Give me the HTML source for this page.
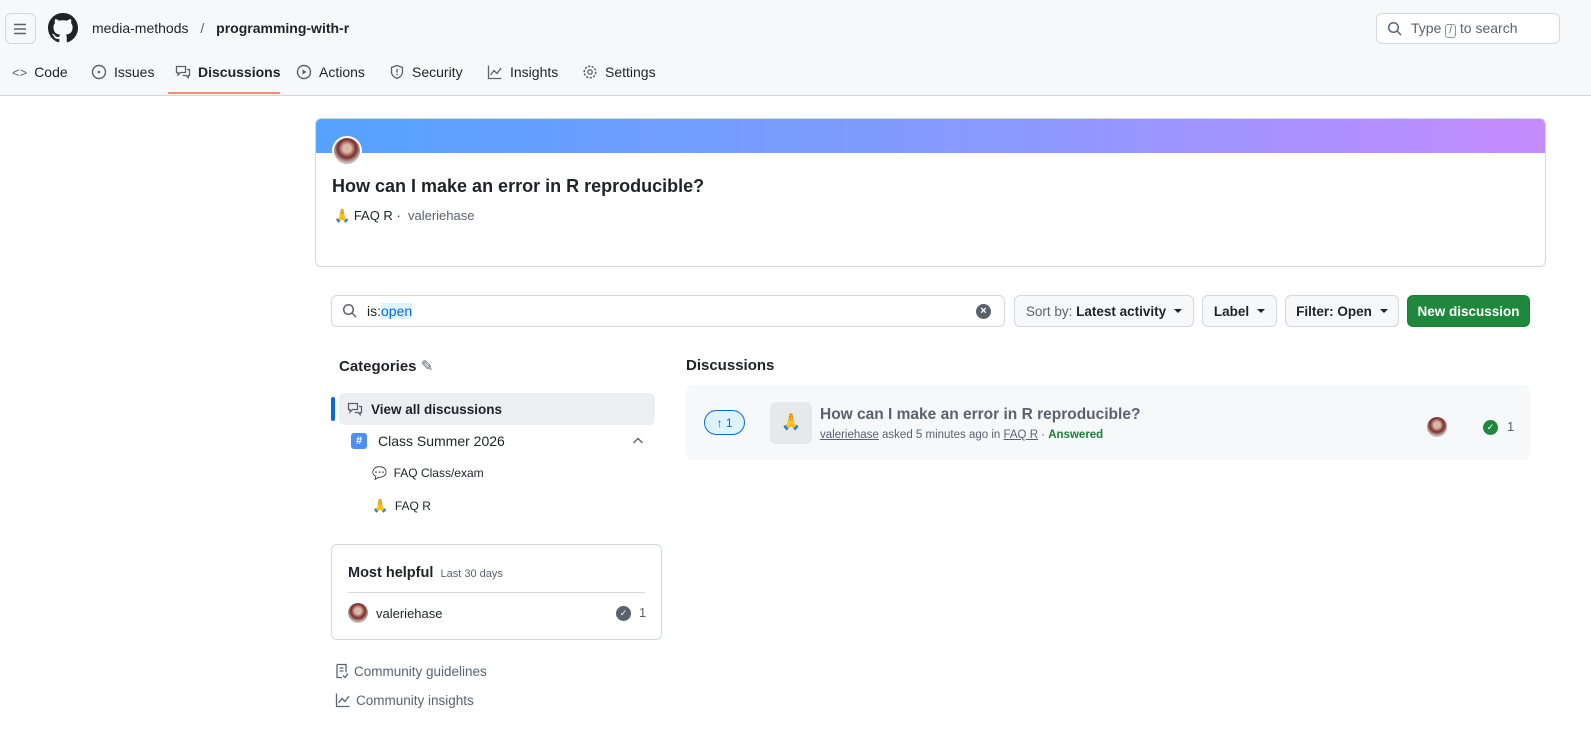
<!DOCTYPE html>
<html><head><style>
*{box-sizing:border-box;margin:0;padding:0}
body{width:1591px;height:756px;background:#fff;font-family:"Liberation Sans",sans-serif;color:#1f2328;position:relative;overflow:hidden;font-size:14px}
.a{position:absolute}
.hdr{left:0;top:0;width:1591px;height:96px;background:#f6f8fa;border-bottom:1px solid #d1d9e0}
.tab{top:64px;font-size:14px;display:flex;align-items:center;gap:7px;color:#1f2328}
svg{display:block}
.btn{top:295px;height:32px;border:1px solid #d1d9e0;border-radius:6px;background:#f6f8fa;font-size:13.5px;display:flex;align-items:center;justify-content:center;gap:8px;color:#1f2328}
.car{width:0;height:0;border-left:4px solid transparent;border-right:4px solid transparent;border-top:4px solid #1f2328}
.pray{font-size:13px}
</style></head><body>
<div class="a hdr"></div>
<div class="a" style="left:5px;top:13px;width:31px;height:31px;border:1px solid #d1d9e0;border-radius:6px;background:#f6f8fa"></div>
<svg class="a" style="left:12px;top:21px" width="16" height="16" viewBox="0 0 16 16"><path d="M2 3.5h12M2 8h12M2 12.5h12" stroke="#59636e" stroke-width="1.5"/></svg>
<svg class="a" style="left:48px;top:13px" width="30" height="30" viewBox="0 0 16 16"><path fill="#1f2328" d="M8 0C3.58 0 0 3.58 0 8c0 3.54 2.29 6.53 5.47 7.59.4.07.55-.17.55-.38 0-.19-.01-.82-.01-1.49-2.01.37-2.53-.49-2.69-.94-.09-.23-.48-.94-.82-1.13-.28-.15-.68-.52-.01-.53.63-.01 1.08.58 1.23.82.72 1.21 1.87.87 2.33.66.07-.52.28-.87.51-1.07-1.78-.2-3.64-.89-3.64-3.95 0-.87.31-1.59.82-2.15-.08-.2-.36-1.02.08-2.12 0 0 .67-.21 2.2.82.64-.18 1.32-.27 2-.27.68 0 1.36.09 2 .27 1.53-1.04 2.2-.82 2.2-.82.44 1.1.16 1.92.08 2.12.51.56.82 1.27.82 2.15 0 3.07-1.87 3.75-3.65 3.95.29.25.54.73.54 1.48 0 1.07-.01 1.93-.01 2.2 0 .21.15.46.55.38A8.013 8.013 0 0016 8c0-4.42-3.58-8-8-8z"/></svg>
<div class="a" style="left:92px;top:20px;font-size:14px">media-methods <span style="color:#59636e;margin:0 8px">/</span> <b style="font-weight:600">programming-with-r</b></div>
<div class="a" style="left:1376px;top:13px;width:184px;height:31px;border:1px solid #d1d9e0;border-radius:6px;background:#fff;font-size:14px;color:#59636e;display:flex;align-items:center;padding-left:10px;gap:8px">
<svg width="16" height="16" viewBox="0 0 16 16"><circle cx="6.5" cy="6.5" r="4.8" fill="none" stroke="#59636e" stroke-width="1.5"/><path d="M10 10l4 4" stroke="#59636e" stroke-width="1.5"/></svg>
<span>Type <span style="display:inline-block;border:1px solid #8c959f;border-radius:3px;font-size:10px;padding:0 3px;line-height:12px">/</span> to search</span></div>

<div class="a tab" style="left:12px"><span style="font-size:13px;color:#59636e">&lt;&gt;</span>Code</div>
<div class="a tab" style="left:91px"><svg width="16" height="16"><circle cx="8" cy="8" r="6.5" fill="none" stroke="#59636e" stroke-width="1.4"/><circle cx="8" cy="8" r="1.3" fill="#59636e"/></svg>Issues</div>
<div class="a tab" style="left:175px;font-weight:600"><svg width="16" height="16"><path d="M1.5 2.5h9v6h-5l-2.5 2.5v-2.5h-1.5z M12 5.5h2.5v6h-1.3v2l-2-2h-3.5" fill="none" stroke="#59636e" stroke-width="1.3"/></svg>Discussions</div>
<div class="a" style="left:168px;top:92px;width:112px;height:2px;background:#fd8c73"></div>
<div class="a tab" style="left:296px"><svg width="16" height="16"><circle cx="8" cy="8" r="6.5" fill="none" stroke="#59636e" stroke-width="1.4"/><path d="M6.5 5.3v5.4l4-2.7z" fill="#59636e"/></svg>Actions</div>
<div class="a tab" style="left:389px"><svg width="16" height="16"><path d="M8 1.5l5.5 2v4.5c0 3-2.5 5.2-5.5 6.5C5 13.2 2.5 11 2.5 8V3.5z" fill="none" stroke="#59636e" stroke-width="1.3"/><path d="M8 5v3.5" stroke="#59636e" stroke-width="1.4"/><circle cx="8" cy="10.5" r=".8" fill="#59636e"/></svg>Security</div>
<div class="a tab" style="left:487px"><svg width="16" height="16"><path d="M1.5 1.5v13h13" fill="none" stroke="#59636e" stroke-width="1.3"/><path d="M3.5 11l3.5-4.5 3 3 4-5.5" fill="none" stroke="#59636e" stroke-width="1.3"/></svg>Insights</div>
<div class="a tab" style="left:582px"><svg width="16" height="16"><circle cx="8" cy="8" r="5.8" fill="none" stroke="#59636e" stroke-width="1.5" stroke-dasharray="2.2 1.4"/><circle cx="8" cy="8" r="2.2" fill="none" stroke="#59636e" stroke-width="1.3"/></svg>Settings</div>

<!-- banner -->
<div class="a" style="left:315px;top:118px;width:1231px;height:149px;border:1px solid #d1d9e0;border-radius:6px;overflow:hidden">
<div style="height:34px;background:linear-gradient(90deg,#54a3ff,#8e98ff 60%,#c58bff)"></div></div>
<div class="a" style="left:332px;top:136px;width:30px;height:30px;border-radius:50%;border:2px solid #fff;background:radial-gradient(circle at 50% 40%,#d9b8a8 20%,#7a2b2b 45%,#c8c0b8 70%)"></div>
<div class="a" style="left:332px;top:176px;font-size:18px;font-weight:600">How can I make an error in R reproducible?</div>
<div class="a" style="left:334px;top:208px;font-size:13px;color:#59636e"><span class="pray">🙏</span> <span style="color:#1f2328">FAQ R ·</span> &nbsp;valeriehase</div>

<!-- search -->
<div class="a" style="left:331px;top:295px;width:674px;height:32px;border:1px solid #d1d9e0;border-radius:6px;display:flex;align-items:center;padding-left:10px;gap:9px;font-size:14px">
<svg width="16" height="16"><circle cx="6.5" cy="6.5" r="4.8" fill="none" stroke="#59636e" stroke-width="1.5"/><path d="M10 10l4 4" stroke="#59636e" stroke-width="1.5"/></svg>
<span>is:<span style="background:#ddf4ff;color:#0969da">open</span></span></div>
<div class="a" style="left:976px;top:304px;width:15px;height:15px;border-radius:50%;background:#59636e;color:#fff;font-size:11px;line-height:15px;text-align:center;font-weight:bold">×</div>
<div class="a btn" style="left:1014px;width:180px"><span><span style="color:#59636e">Sort by:</span> <b style="font-weight:600">Latest activity</b></span><span class="car"></span></div>
<div class="a btn" style="left:1202px;width:75px;font-weight:600">Label<span class="car"></span></div>
<div class="a btn" style="left:1285px;width:114px;font-weight:600">Filter: Open<span class="car"></span></div>
<div class="a btn" style="left:1407px;width:123px;background:#1f883d;border-color:#1a7f37;color:#fff;font-weight:600">New discussion</div>

<!-- sidebar -->
<div class="a" style="left:339px;top:357px;font-size:15px;font-weight:600">Categories <span style="color:#59636e;font-weight:normal">✎</span></div>
<div class="a" style="left:331px;top:397px;width:4px;height:24px;background:#0969da;border-radius:2px"></div>
<div class="a" style="left:339px;top:393px;width:316px;height:32px;background:#eceef1;border-radius:6px;display:flex;align-items:center;padding-left:8px;gap:8px;font-size:13.5px;font-weight:600">
<svg width="16" height="16"><path d="M1.5 2.5h9v6h-5l-2.5 2.5v-2.5h-1.5z M12 5.5h2.5v6h-1.3v2l-2-2h-3.5" fill="none" stroke="#59636e" stroke-width="1.3"/></svg>View all discussions</div>
<div class="a" style="left:351px;top:433px;width:16px;height:16px;background:#4c8ff0;border-radius:3px;color:#fff;font-size:11px;text-align:center;line-height:16px;font-weight:bold">#</div>
<div class="a" style="left:378px;top:433px;font-size:14px">Class Summer 2026</div>
<svg class="a" style="left:632px;top:436px" width="12" height="10"><path d="M1.5 7l4.5-4.5 4.5 4.5" fill="none" stroke="#59636e" stroke-width="1.4"/></svg>
<div class="a" style="left:372px;top:466px;font-size:12px;color:#1f2328"><span style="color:#c8b6f0">💬</span>&nbsp; FAQ Class/exam</div>
<div class="a" style="left:372px;top:498px;font-size:12px"><span class="pray">🙏</span>&nbsp; FAQ R</div>

<div class="a" style="left:331px;top:544px;width:331px;height:96px;border:1px solid #d1d9e0;border-radius:6px"></div>
<div class="a" style="left:348px;top:565px;font-size:14.5px;font-weight:600">Most helpful <span style="font-size:11px;color:#59636e;font-weight:normal">&nbsp;Last 30 days</span></div>
<div class="a" style="left:348px;top:592px;width:297px;height:1px;background:#d1d9e0"></div>
<div class="a" style="left:348px;top:603px;width:20px;height:20px;border-radius:50%;background:radial-gradient(circle at 50% 40%,#d9b8a8 20%,#7a2b2b 45%,#c8c0b8 70%)"></div>
<div class="a" style="left:376px;top:606px;font-size:13px">valeriehase</div>
<div class="a" style="left:616px;top:606px;width:15px;height:15px;border-radius:50%;background:#59636e;color:#fff;font-size:9px;text-align:center;line-height:15px">✓</div>
<div class="a" style="left:639px;top:605px;font-size:13px;color:#59636e">1</div>

<div class="a" style="left:335px;top:663px;font-size:13.5px;color:#59636e;display:flex;gap:5px;align-items:center"><svg width="14" height="16"><path d="M2 1.5h9v8M2 1.5v13h5M4.5 5h4M4.5 8h4M8 12.5l2 2 3-4" fill="none" stroke="#59636e" stroke-width="1.3"/></svg>Community guidelines</div>
<div class="a" style="left:335px;top:692px;font-size:13.5px;color:#59636e;display:flex;gap:5px;align-items:center"><svg width="16" height="16"><path d="M1.5 1.5v13h13" fill="none" stroke="#59636e" stroke-width="1.3"/><path d="M3.5 11l3.5-4.5 3 3 4-5.5" fill="none" stroke="#59636e" stroke-width="1.3"/></svg>Community insights</div>

<!-- discussions -->
<div class="a" style="left:686px;top:357px;font-size:15px;font-weight:600">Discussions</div>
<div class="a" style="left:686px;top:385px;width:844px;height:75px;background:#f6f8fa;border-radius:6px"></div>
<div class="a" style="left:704px;top:410px;width:41px;height:25px;border:1px solid #0969da;border-radius:13px;background:#ddf4ff;color:#0969da;font-size:12px;display:flex;align-items:center;justify-content:center;gap:5px">↑ 1</div>
<div class="a" style="left:770px;top:402px;width:42px;height:42px;background:#e6e8eb;border-radius:6px;text-align:center;line-height:42px;font-size:16px">🙏</div>
<div class="a" style="left:820px;top:406px;font-size:15.5px;font-weight:600;color:#59636e">How can I make an error in R reproducible?</div>
<div class="a" style="left:820px;top:429px;font-size:11.5px;color:#59636e"><u>valeriehase</u> asked 5 minutes ago in <u>FAQ R</u> · <span style="color:#1a7f37;font-weight:600">Answered</span></div>
<div class="a" style="left:1427px;top:417px;width:20px;height:20px;border-radius:50%;background:radial-gradient(circle at 50% 40%,#d9b8a8 20%,#7a2b2b 45%,#c8c0b8 70%)"></div>
<div class="a" style="left:1483px;top:420px;width:15px;height:15px;border-radius:50%;background:#1f883d;color:#fff;font-size:9px;text-align:center;line-height:15px">✓</div>
<div class="a" style="left:1507px;top:419px;font-size:13px;color:#59636e">1</div>
</body></html>
